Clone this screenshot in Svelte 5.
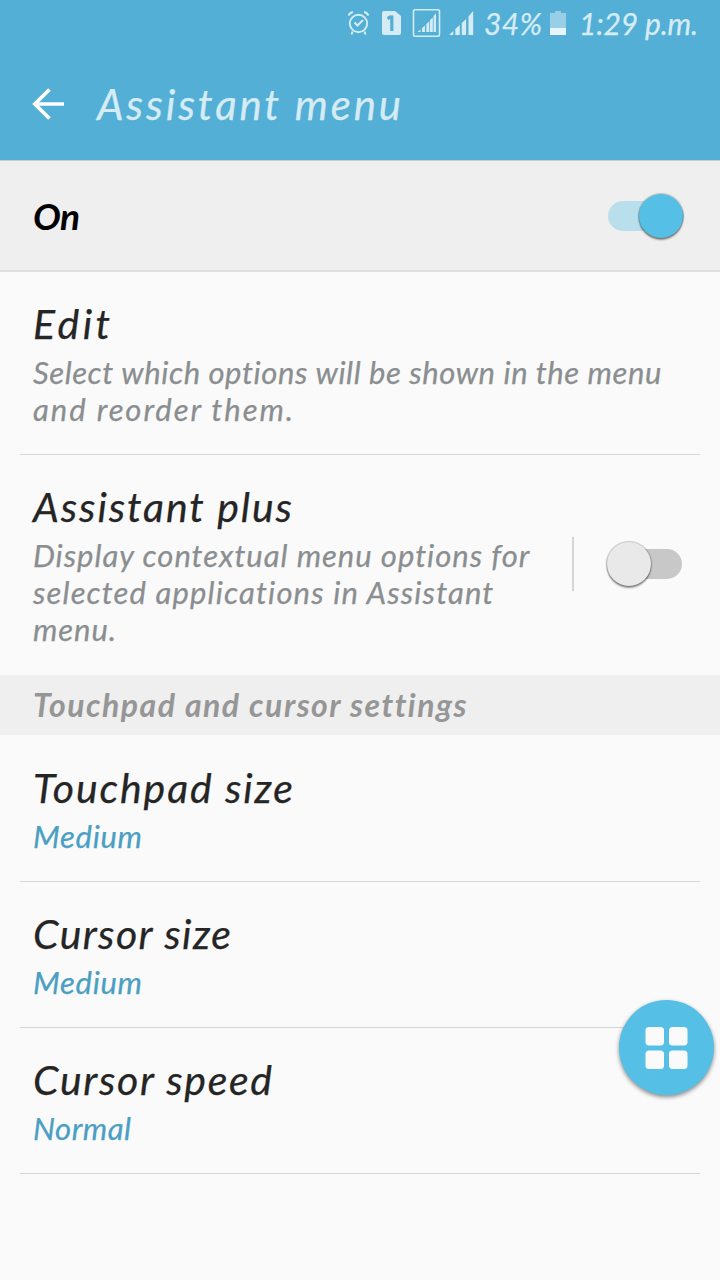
<script>
  // Spreads the letters of a line so that it spans the given width.
  function fit(node, width) {
    const natural = node.getBoundingClientRect().width;
    node.style.letterSpacing = `${(width - 1 - natural) / (node.textContent.length - 1)}px`;
  }

  const sizes = [
    { title: 'Touchpad size', tw: 261, value: 'Medium', vw: 110 },
    { title: 'Cursor size', tw: 199, value: 'Medium', vw: 110 },
    { title: 'Cursor speed', tw: 240, value: 'Normal', vw: 99 }
  ];
</script>

{#snippet line(text, width)}
  <span class="line"><span class="fit" use:fit={width}>{text}</span></span>
{/snippet}

<main>
  <header>
    <div class="status">
      <svg width="144" height="46" viewBox="0 0 144 46" fill="none" stroke="#d6ecf5">
        <circle cx="18.500" cy="23.500" r="8.700" stroke-width="1.900" />
        <path d="M14.500 22.500l3 3 5.500-5.500M12.500 31.500l-1 3M24.500 31.500l1 3" stroke-width="2" />
        <path d="M8.500 15.500q1.500-3 4.500-3.500M24 12q3 .5 4.500 3.500" stroke-width="2" />
        <path d="M44 11h11l6 5v17q0 2-2 2H44q-2 0-2-2V13q0-2 2-2z" fill="#d6ecf5" stroke="none" />
        <path d="M47.500 18.500l4-2M51.800 15.500V31" stroke="#53afd6" stroke-width="3.200" />
        <rect x="73.500" y="9.800" width="26" height="26.500" rx="1.500" stroke-width="1.600" />
        <g fill="#d6ecf5" stroke="none">
          <path d="M77.500 32l3-2.500V32zM82 32v-4l3-2.500V32zM86.300 32v-8l3-2.700V32zM90 32V20l2.800-2.500V32zM93.600 32V16l2.400-2.500V32z" />
          <path d="M109 35l4.300-4v4zM115.300 35v-6l4.500-4v10zM121.800 35V23l4.300-4v16zM128.500 35V16.500l4.700-5.500v24z" />
        </g>
      </svg>
      <span class="pct"><span class="fit" use:fit={59}>34%</span></span>
      <svg class="battery" width="16" height="46" viewBox="0 0 16 46">
        <path d="M0 13h5v-2h6v2h5v15H0z" fill="#98cfe6" />
        <path d="M0 28h16v7H0z" fill="#e8f6fc" />
      </svg>
      <span class="time"><span class="fit" use:fit={120}>1:29 p.m.</span></span>
    </div>
    <div class="bar">
      <svg width="34" height="34" viewBox="0 0 34 34" fill="none" stroke="#fff" stroke-width="3.700">
        <path d="M18.500 2.500L3.800 17l14.700 14.500M3 17h30" />
      </svg>
      <h1>{@render line('Assistant menu', 305)}</h1>
    </div>
  </header>

  <section class="master">
    <strong>{@render line('On', 48)}</strong>
    <span class="switch on"><i></i></span>
  </section>

  <section class="row">
    <h2>{@render line('Edit', 78)}</h2>
    <p>
      {@render line('Select which options will be shown in the menu', 629)}
      {@render line('and reorder them.', 261)}
    </p>
  </section>

  <section class="plus">
    <div class="copy">
      <h2>{@render line('Assistant plus', 260)}</h2>
      <p>
        {@render line('Display contextual menu options for', 497)}
        {@render line('selected applications in Assistant', 461)}
        {@render line('menu.', 84)}
      </p>
    </div>
    <span class="rule"></span>
    <span class="switch"><i></i></span>
  </section>

  <h3>{@render line('Touchpad and cursor settings', 432)}</h3>

  {#each sizes as s}
    <section class="row">
      <h2>{@render line(s.title, s.tw)}</h2>
      <p class="value">{@render line(s.value, s.vw)}</p>
    </section>
  {/each}

  <button aria-label="Assistant">
    <svg width="44" height="44" viewBox="0 0 44 44" fill="#fafafa">
      <rect x="0.500" y="1" width="18.500" height="18.500" rx="3.500" />
      <rect x="24" y="1" width="18.500" height="18.500" rx="3.500" />
      <rect x="0.500" y="24.500" width="18.500" height="18.500" rx="3.500" />
      <rect x="24" y="24.500" width="18.500" height="18.500" rx="3.500" />
    </svg>
  </button>
</main>

<style>
  :global(body) { margin: 0; background: #fafafa; }
  main {
    position: relative;
    width: 720px;
    height: 1280px;
    overflow: hidden;
    background: #fafafa;
    font-family: Lato, "Open Sans", sans-serif;
    font-style: italic;
    color: #252525;
    -webkit-text-stroke: .25px currentColor;
  }
  h1, h2, h3, p { margin: 0; font-weight: 400; }
  svg { display: block; flex: none; }
  .line { display: block; white-space: nowrap; }
  .fit { display: inline-block; white-space: pre; }
  header { height: 160px; background: #53afd6; color: #d6ecf5; }
  .status {
    display: flex;
    height: 46px;
    padding-left: 340px;
    font-size: 30px;
    line-height: 46px;
  }
  .pct { width: 66px; flex: none; }
  .time { margin-left: 13px; white-space: nowrap; }
  .bar {
    display: flex;
    align-items: center;
    height: 116px;
    padding-left: 31px;
  }
  h1 { margin-left: 32px; font-size: 42px; line-height: 48px; }
  .master {
    box-sizing: border-box;
    display: flex;
    align-items: center;
    justify-content: space-between;
    height: 112px;
    padding: 0 36px 0 33px;
    background: #efefef;
    border-top: 1px solid #c9cccd;
    border-bottom: 2px solid #e0e0e0;
  }
  strong { font-size: 37px; line-height: 44px; color: #000; font-weight: 700; -webkit-text-stroke: 0; }
  .switch {
    display: flex;
    align-items: center;
    box-sizing: border-box;
    width: 76px;
    height: 30px;
    border-radius: 15px;
    background: #c8c8c8;
    flex: none;
  }
  .switch i {
    width: 44px;
    height: 44px;
    border-radius: 50%;
    background: #e9e9e9;
    box-shadow: 0 2px 2px rgba(0, 0, 0, .4), 0 0 1px 1px rgba(0, 0, 0, .2);
  }
  .switch.on { justify-content: flex-end; background: #b9dfec; padding-right: 1px; }
  .switch.on i { background: #56bfe5; }
  h2 { font-size: 41px; line-height: 48px; }
  p { margin-top: 6px; font-size: 31px; line-height: 37px; color: #8a8e90; }
  .row {
    margin: 0 20px;
    padding: 28px 0 26px 13px;
    border-bottom: 1px solid #d5d5d5;
  }
  .value { color: #4a9fc3; }
  .plus {
    display: flex;
    align-items: center;
    box-sizing: border-box;
    height: 220px;
    padding: 0 38px 2px 33px;
  }
  .copy { width: 539px; height: 163px; }
  .rule { width: 2px; height: 54px; margin-right: 33px; background: #d5d5d5; }
  .plus .switch { width: 75px; }
  h3 {
    height: 60px;
    margin-bottom: 1px;
    padding-left: 33px;
    background: #efefef;
    color: #969696;
    font-size: 32px;
    font-weight: 700;
    line-height: 60px;
    -webkit-text-stroke: 0;
  }
  button {
    position: absolute;
    left: 619px;
    top: 1000px;
    display: grid;
    place-items: center;
    width: 95px;
    height: 95px;
    padding: 0;
    border: 0;
    border-radius: 50%;
    background: #56bfe5;
    box-shadow: 0 2px 4px rgba(0, 0, 0, .45);
  }
</style>
